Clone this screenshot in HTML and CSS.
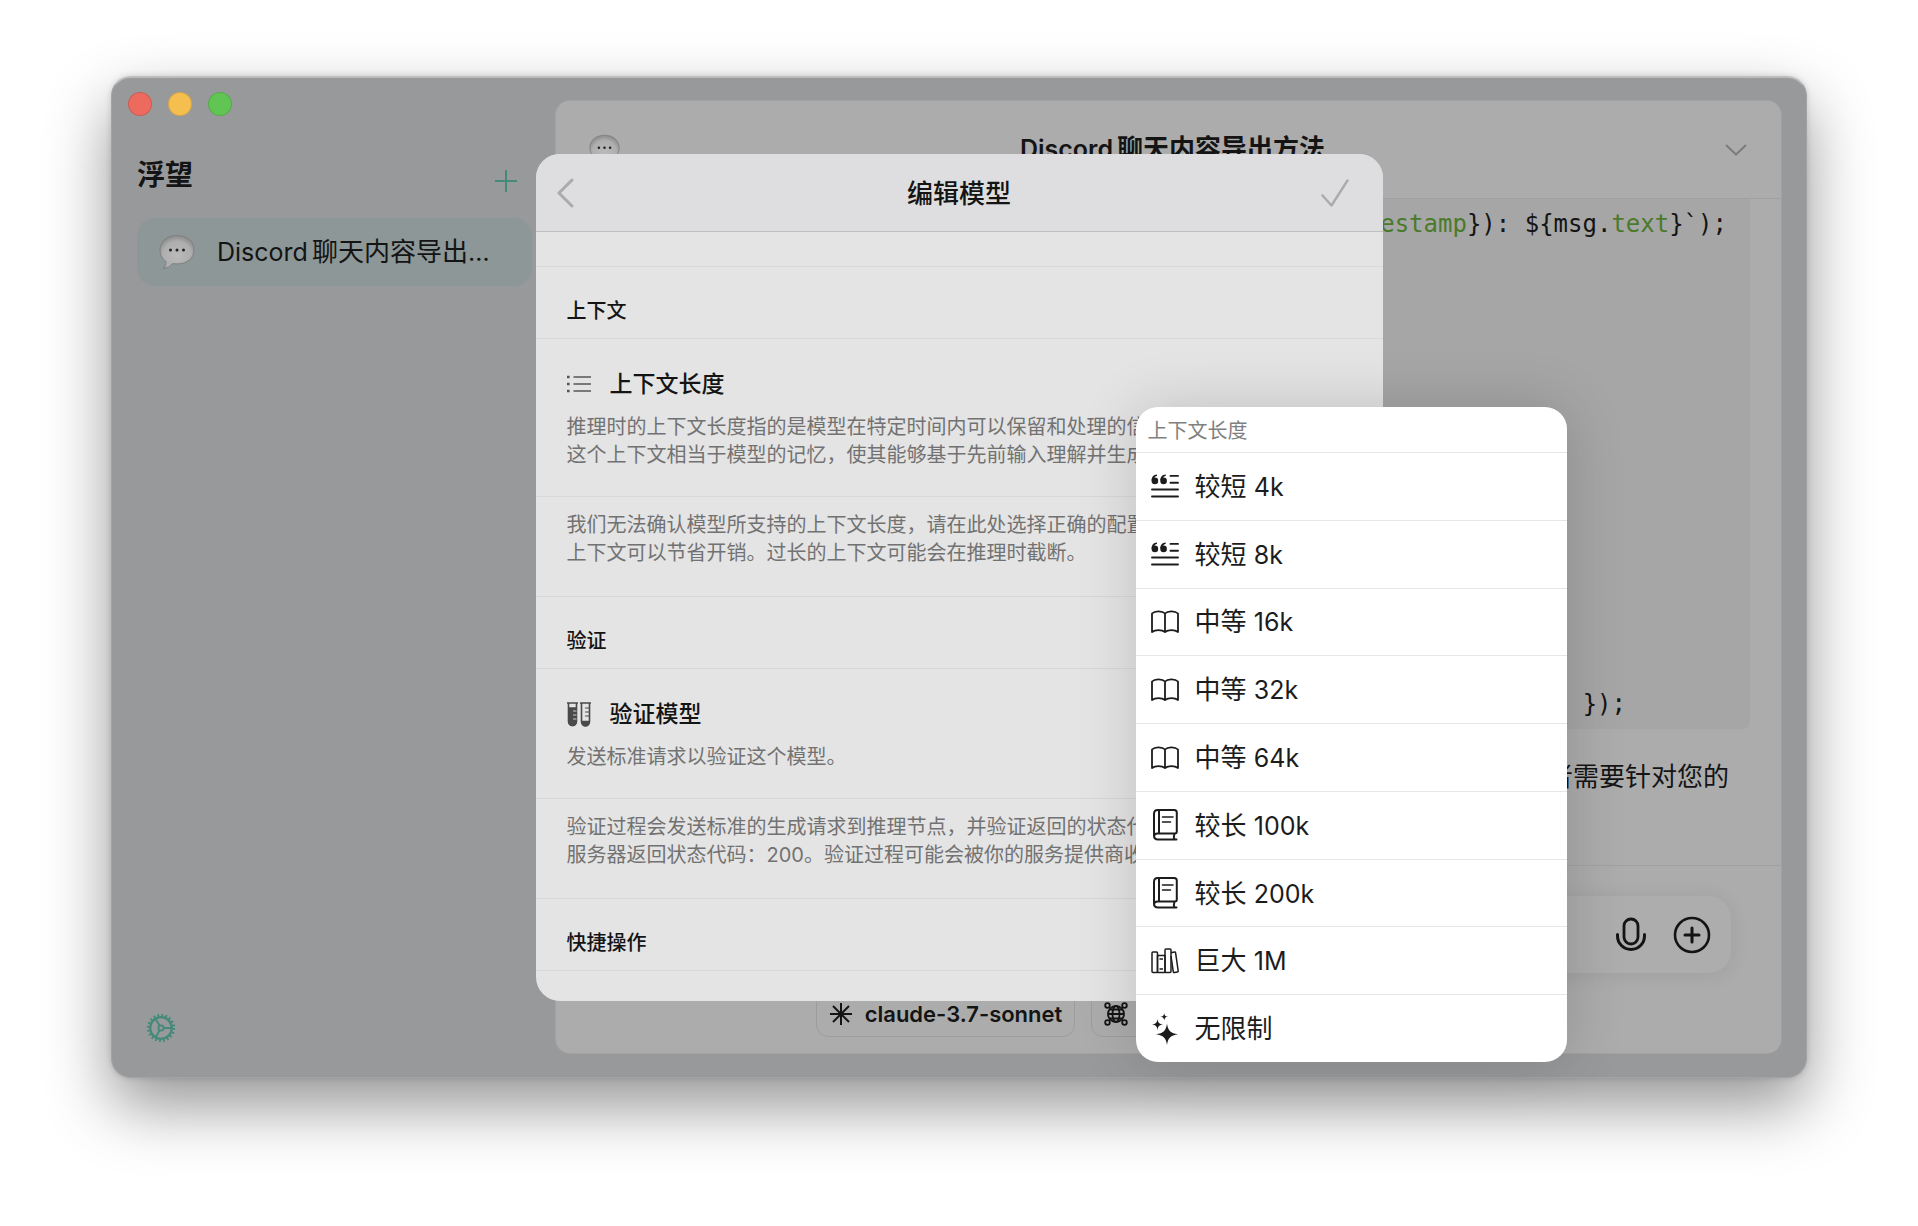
FILE: index.html
```html
<!DOCTYPE html>
<html lang="zh-CN">
<head>
<meta charset="utf-8">
<title>浮望</title>
<link rel="stylesheet" href="styles.css">
</head>
<body>
<svg class="defs" width="0" height="0" aria-hidden="true">
  <defs>
    <radialGradient id="bubble-fill" cx="50%" cy="60%" r="60%">
      <stop offset="0" stop-color="#bababa"/><stop offset=".7" stop-color="#aeaeae"/><stop offset="1" stop-color="#8a8a8a"/>
    </radialGradient>
    <symbol id="i-bubble" viewBox="0 0 36 36">
      <path d="M18 1.500C8 1.500 1 7.500 1 16c0 5 2.500 9 6 11.500 0 3-1 5-3 7 4 0 7.500-2 9.500-5 1.500.3 3 .4 4.500.4 10 0 17-5.500 17-14S28 1.500 18 1.500z" fill="url(#bubble-fill)" stroke="#808080"/>
      <circle cx="11.500" cy="16" r="1.500" fill="#222"/><circle cx="18" cy="16" r="1.500" fill="#222"/><circle cx="24.500" cy="16" r="1.500" fill="#222"/>
    </symbol>
    <symbol id="i-quote" viewBox="0 0 28 24">
      <g fill="currentColor"><circle cx="3.900" cy="6.900" r="3.300"/><path d="M.6 6.800C.6 3 2.600.8 6 .6v1.500C4.200 2.400 3.200 3.500 3 5z"/><circle cx="12.600" cy="6.900" r="3.300"/><path d="M9.300 6.800C9.300 3 11.300.8 14.700.6v1.500C12.900 2.400 11.900 3.500 11.700 5z"/></g>
      <g stroke="currentColor" stroke-width="1.900" stroke-linecap="round"><path d="M19.500 1.900h7.500M19.500 8.700h7.500M1 15.500h26M1 22.500h26"/></g>
    </symbol>
    <symbol id="i-open" viewBox="0 0 28 24">
      <path d="M14 3.500C11.500.8 4 .3 1 3.500V22c3-2.500 10-2.500 13 0 3-2.500 10-2.500 13 0V3.500C24 .3 16.500.8 14 3.500zM14 3.500V22" fill="none" stroke="currentColor" stroke-width="1.800" stroke-linejoin="round"/>
    </symbol>
    <symbol id="i-closed" viewBox="0 0 28 32">
      <path d="M25.500 30.500H7c-2.500 0-4-1.500-4-4V5c0-2.500 1.200-4 3.700-4h16.500c1.700 0 2.600 1 2.600 2.600v19c0 1.200-.8 2-2 2H6.500C4.500 24.600 3 26 3 28M8 1v23.500M23.500 24.800c-.8 1.800-.8 3.800 0 5.500" fill="none" stroke="currentColor" stroke-width="2" stroke-linecap="round"/>
      <path d="M11.500 8h10.500M11.500 13h8" stroke="currentColor" stroke-width="1.600" stroke-linecap="round"/>
    </symbol>
    <symbol id="i-books" viewBox="0 0 28 26">
      <g fill="none" stroke="currentColor" stroke-width="1.500" stroke-linejoin="round"><rect x="1" y="4" width="5.500" height="20.500" rx="1"/><path d="M6.500 7.500H14v17H6.500zM8.500 11h3.500M8.500 21h3.500"/><rect x="14" y="1" width="6" height="23.500" rx="1"/><path d="M20 4.800 23.500 4c.6-.1 1 .2 1.100.8L27.200 23c.1.700-.2 1-.8 1.100l-3 .5c-.6.1-1-.2-1.100-.8L20 8"/></g>
    </symbol>
    <symbol id="i-sparkles" viewBox="0 0 28 34">
      <path d="M16 11.500c1 7 3.500 9.800 11 10.800-7.500 1-10 3.800-11 10.800-1-7-3.500-9.800-11-10.800 7.500-1 10-3.800 11-10.800zM6.500 7c.5 3.800 1.800 5 5.500 5.500-3.700.5-5 1.700-5.500 5.500-.5-3.800-1.800-5-5.500-5.500C4.700 12 6 10.800 6.500 7zM13.200 1c.3 2.700 1.200 3.500 3.800 3.800-2.600.3-3.500 1.200-3.800 3.800-.3-2.600-1.200-3.500-3.800-3.800 2.600-.3 3.500-1.100 3.800-3.800z" fill="currentColor"/>
    </symbol>
  </defs>
</svg>

<div class="window">
  <aside class="sidebar">
    <div class="lights"><span class="light light-close"></span><span class="light light-min"></span><span class="light light-zoom"></span></div>
    <div class="brand">
      <h1>浮望</h1>
      <button class="plain accent" aria-label="新建"><svg width="22" height="22" viewBox="0 0 22 22"><path d="M11 0v22M0 11h22" stroke="currentColor" stroke-width="2"/></svg></button>
    </div>
    <a class="chat" href="#chat">
      <svg class="bubble" width="36" height="36"><use href="#i-bubble"/></svg>
      <span class="chat-name"><span class="latin">Discord</span>聊天内容导出<span class="latin">…</span></span>
    </a>
    <button class="plain accent settings" aria-label="设置">
      <svg width="30" height="30" viewBox="0 0 30 30" fill="none" stroke="currentColor"><circle cx="15" cy="15" r="10.800" stroke-width="2.200"/><circle cx="15" cy="15" r="12.800" stroke-width="2.600" stroke-dasharray="1.800 2.221"/><circle cx="15" cy="15" r="2.600" stroke-width="1.800"/><path d="M17.600 15h8M13.700 12.800 9.700 5.900M13.700 17.200l-4 6.900" stroke-width="1.900"/></svg>
    </button>
  </aside>

  <main class="panel">
    <header class="panel-head">
      <svg width="31" height="31"><use href="#i-bubble" width="31" height="31"/></svg>
      <h2><span class="latin">Discord</span>聊天内容导出方法</h2>
      <button class="plain chevron" aria-label="更多"><svg width="22" height="12" viewBox="0 0 22 12" fill="none"><path d="M1 1l10 9.500L21 1" stroke="currentColor" stroke-width="2"/></svg></button>
    </header>
    <div class="messages">
      <pre class="code"><code><span class="prop">estamp</span>}): ${msg.<span class="prop">text</span>}`);</code><code class="inner">) });</code></pre>
      <p class="reply">者需要针对您的</p>
    </div>
    <footer class="composer">
      <div class="field">
        <input type="text" aria-label="消息">
        <button class="plain" aria-label="语音"><svg width="32" height="36" viewBox="0 0 32 36" fill="none" stroke="currentColor" stroke-width="3" stroke-linecap="round"><rect x="9" y="2" width="14" height="25" rx="7" stroke-width="2.800"/><path d="M2.500 17.500v1.500a13.500 13.500 0 0 0 27 0v-1.500"/></svg></button>
        <button class="plain" aria-label="添加"><svg width="38" height="38" viewBox="0 0 38 38" fill="none" stroke="currentColor" stroke-width="3" stroke-linecap="round"><circle cx="19" cy="19" r="17" stroke-width="2.600"/><path d="M19 12v14M12 19h14"/></svg></button>
      </div>
      <div class="chips">
        <button class="chip"><svg width="24" height="24" viewBox="0 0 24 24"><path d="M12 1v22M1 12h22M4 4l16 16M20 4 4 20" stroke="currentColor" stroke-width="2"/></svg>claude-3.7-sonnet</button>
        <button class="chip chip-web" aria-label="网络"><svg width="24" height="24" viewBox="0 0 24 24" fill="none" stroke="currentColor" stroke-width="1.800"><circle cx="12" cy="12" r="8"/><ellipse cx="12" cy="12" rx="3.500" ry="8"/><path d="M4 12h16M5.500 7.500h13M5.500 16.500h13"/><circle cx="3.500" cy="3.500" r="2.300"/><circle cx="20.500" cy="3.500" r="2.300"/><circle cx="3.500" cy="20.500" r="2.300"/><circle cx="20.500" cy="20.500" r="2.300"/></svg></button>
      </div>
    </footer>
  </main>

  <div class="overlay">
    <div class="dialog-wrap">
      <section class="dialog" role="dialog" aria-labelledby="dialog-title">
        <header class="dialog-head">
          <button class="plain back" aria-label="返回"><svg width="18" height="30" viewBox="0 0 18 30" fill="none"><path d="M16 2 3 15l13 13" stroke="currentColor" stroke-width="3" stroke-linecap="round" stroke-linejoin="round"/></svg></button>
          <h2 id="dialog-title">编辑模型</h2>
          <button class="plain" aria-label="完成"><svg width="28" height="28" viewBox="0 0 28 28" fill="none"><path d="M1.500 16.500 10.500 26.500 26.500 1.500" stroke="currentColor" stroke-width="2.400" stroke-linecap="round" stroke-linejoin="round"/></svg></button>
        </header>
        <div class="spacer"></div>
        <h3>上下文</h3>
        <div class="setting">
          <h4><svg width="24" height="18" viewBox="0 0 24 18"><path d="M6.500 2H24M6.500 9H24M6.500 16H24" stroke="#555" stroke-width="1.600"/><path d="M0 2h2.600M0 9h2.600M0 16h2.600" stroke="#555" stroke-width="2.400"/></svg>上下文长度</h4>
          <p>推理时的上下文长度指的是模型在特定时间内可以保留和处理的信<br>这个上下文相当于模型的记忆，使其能够基于先前输入理解并生成</p>
        </div>
        <p class="note">我们无法确认模型所支持的上下文长度，请在此处选择正确的配置<br>上下文可以节省开销。过长的上下文可能会在推理时截断。</p>
        <h3>验证</h3>
        <div class="setting">
          <h4><svg width="24" height="25" viewBox="0 0 24 25" fill="none" stroke="#4a4a4a" stroke-width="1.600"><path d="M0 1h11M13 1h11M1.500 1v18.500a4 4 0 0 0 8 0V1M14.500 1v18.500a4 4 0 0 0 8 0V1"/><path d="M2 6h7v14a3.500 3.500 0 0 1-7 0zM15 19.500h7v1a3.500 3.500 0 0 1-7 0z" fill="#4a4a4a"/><path d="M6 9h3.500M6 13h3.500M6 17h3.500" stroke="#ccc" stroke-width="1"/><path d="M18 6h4M18 10h4M18 14h4" stroke-width="1.200"/></svg>验证模型</h4>
          <p>发送标准请求以验证这个模型。</p>
        </div>
        <p class="note">验证过程会发送标准的生成请求到推理节点，并验证返回的状态代<br>服务器返回状态代码：200。验证过程可能会被你的服务提供商收</p>
        <h3>快捷操作</h3>
        <div class="setting"></div>
      </section>

      <div class="menu" role="menu" aria-labelledby="menu-title">
        <div class="menu-title" id="menu-title">上下文长度</div>
        <button role="menuitem"><svg width="28" height="24"><use href="#i-quote"/></svg><span>较短 <span class="latin">4k</span></span></button>
        <button role="menuitem"><svg width="28" height="24"><use href="#i-quote"/></svg><span>较短 <span class="latin">8k</span></span></button>
        <button role="menuitem"><svg width="28" height="24"><use href="#i-open"/></svg><span>中等 <span class="latin">16k</span></span></button>
        <button role="menuitem"><svg width="28" height="24"><use href="#i-open"/></svg><span>中等 <span class="latin">32k</span></span></button>
        <button role="menuitem"><svg width="28" height="24"><use href="#i-open"/></svg><span>中等 <span class="latin">64k</span></span></button>
        <button role="menuitem"><svg width="28" height="32"><use href="#i-closed"/></svg><span>较长 <span class="latin">100k</span></span></button>
        <button role="menuitem"><svg width="28" height="32"><use href="#i-closed"/></svg><span>较长 <span class="latin">200k</span></span></button>
        <button role="menuitem"><svg width="28" height="26"><use href="#i-books"/></svg><span>巨大 <span class="latin">1M</span></span></button>
        <button role="menuitem"><svg width="28" height="34"><use href="#i-sparkles"/></svg><span>无限制</span></button>
      </div>
    </div>
  </div>
</div>
</body>
</html>
```
FILE: styles.css
```css
* { box-sizing: border-box; margin: 0; }

body {
  min-height: 100vh;
  display: flex;
  padding: 76px 111px 148px;
  background: #fff;
  color: #141414;
  font-family: Inter, "Noto Sans CJK SC", sans-serif;
  font-size: 26px;
}

.defs { position: absolute; }
svg { display: block; flex: none; }
button, input { font: inherit; color: inherit; border: 0; background: none; padding: 0; }
.latin { font-size: 25px; }

.window {
  position: relative;
  flex: 1;
  display: flex;
  background: #98999b;
  border: 1px solid #a3a3a3;
  border-top: 2px solid #bdbdbd;
  border-radius: 20px;
  box-shadow: 0 28px 64px rgba(0, 0, 0, .42), 0 0 6px rgba(0, 0, 0, .15);
}

/* Sidebar */
.sidebar {
  flex: none;
  width: 444px;
  display: flex;
  flex-direction: column;
  padding: 14px 24px 34px 25px;
}
.lights { display: flex; gap: 16px; margin-left: -9px; }
.light { width: 24px; height: 24px; border-radius: 50%; border: 1px solid rgba(0, 0, 0, .12); }
.light-close { background: #ed6a5e; }
.light-min { background: #f5bf4f; }
.light-zoom { background: #61c554; }
.brand { display: flex; align-items: center; justify-content: space-between; height: 44px; margin: 37px 15px 21px 0; }
.brand h1 { font-size: 28px; font-weight: 700; line-height: 44px; }
.brand button { padding-top: 12px; }
.accent { color: #438a79; }
.chat {
  display: flex;
  align-items: center;
  gap: 22px;
  height: 68px;
  padding: 0 22px;
  border-radius: 18px;
  background: #8d9797;
  color: #141414;
  text-decoration: none;
  white-space: nowrap;
}
.chat-name { padding-bottom: 6px; }
.chat .latin:first-child, .panel-head .latin { margin-right: 4px; }
.settings { margin-top: auto; width: 30px; margin-left: 9px; }

/* Conversation */
.panel {
  flex: 1;
  min-width: 0;
  display: flex;
  flex-direction: column;
  margin: 23px 25px 24px 0;
  background: #acacac;
  border-radius: 14px;
  box-shadow: 0 0 0 1px #a2a2a3;
  overflow: hidden;
}
.panel-head { display: flex; align-items: center; height: 98px; padding: 0 34px 0 33px; border-bottom: 1px solid #a1a1a1; }
.panel-head h2 { flex: 1; padding-bottom: 6px; text-align: center; font-size: 26px; font-weight: 600; }
.chevron { color: #7d7d7d; }
.messages { flex: 1; display: flex; flex-direction: column; padding: 0 31px 68px; }
.code {
  flex: 1;
  display: flex;
  flex-direction: column;
  justify-content: space-between;
  align-items: flex-end;
  padding: 10px 23px;
  margin-bottom: 28px;
  border-radius: 0 0 8px 8px;
  background: #a6a6a6;
}
.code code { font: 24px/30px "DejaVu Sans Mono", monospace; }
.code .inner { padding-right: 101px; }
.prop { color: #4b7a2b; }
.reply { padding-right: 21px; text-align: right; line-height: 40px; }
.composer { padding: 30px 50px 16px; border-top: 1px solid #a1a1a1; }
.field {
  display: flex;
  align-items: center;
  gap: 26px;
  height: 77px;
  padding: 0 20px;
  border-radius: 22px;
  background: #adadad;
  box-shadow: 0 2px 20px rgba(0, 0, 0, .08);
}
.field input { flex: 1; min-width: 0; }
.chips { display: flex; justify-content: center; gap: 16px; margin-top: 18px; }
.chip {
  display: flex;
  align-items: center;
  gap: 12px;
  height: 46px;
  padding: 0 12px;
  border: 1px solid #9d9d9d;
  border-radius: 12px;
  font-size: 22px;
  font-weight: 600;
}
.chip-web { width: 430px; }

/* Model dialog */
.overlay { position: absolute; inset: 0; display: flex; align-items: center; justify-content: center; }
.dialog-wrap { position: relative; width: 50%; }
.dialog {
  height: 847px;
  overflow: hidden;
  border-radius: 24px;
  background: #e4e4e4;
}
.dialog-head {
  display: flex;
  align-items: center;
  height: 78px;
  padding: 0 34px 0 20px;
  border-bottom: 1px solid #bfbfc1;
  background: #dedee0;
  color: #ababac;
}
.back { width: 42px; }
.dialog-head h2 { flex: 1; padding-bottom: 2px; text-align: center; font-size: 26px; font-weight: 500; color: #141414; }
.spacer { height: 34px; }
.dialog h3 {
  height: 72px;
  padding: 29px 31px 0;
  border-top: 1px solid #d8d8d8;
  font-size: 20px;
  line-height: 30px;
  font-weight: 500;
}
.setting, .note { border-top: 1px solid #d8d8d8; padding: 0 31px 27px; }
.setting h4 { display: flex; align-items: center; gap: 19px; padding: 27px 0 11px; font-size: 23px; line-height: 36px; font-weight: 500; }
.setting p, .note { color: #727272; font-size: 20px; line-height: 28px; white-space: nowrap; }
.note { padding: 14px 31px 29px; }

/* Context length menu */
.menu {
  position: absolute;
  top: 253px;
  right: -184px;
  width: 431px;
  height: 655px;
  display: flex;
  flex-direction: column;
  border-radius: 22px;
  background: #fff;
  box-shadow: 0 0 60px rgba(0, 0, 0, .16);
}
.menu-title { height: 45px; padding: 2px 12px 0; line-height: 44px; font-size: 20px; color: #808080; }
.menu button {
  flex: 1;
  display: flex;
  align-items: center;
  gap: 16px;
  padding: 0 15px;
  border-top: 1px solid #e6e6e6;
  text-align: left;
  color: #1c1c1c;
}
.menu button span { padding-bottom: 4px; }
```
